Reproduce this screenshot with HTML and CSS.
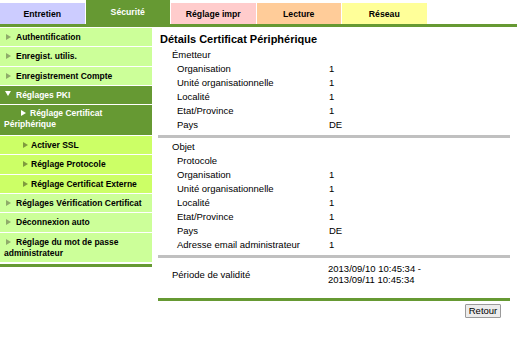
FILE: index.html
```html
<!DOCTYPE html>
<html lang="fr">
<head>
<meta charset="utf-8">
<title>Détails Certificat Périphérique</title>
<link rel="stylesheet" href="styles.css">
</head>
<body>
<div class="tabs">
  <div class="tab t-entretien">Entretien</div>
  <div class="tab t-securite active">Sécurité</div>
  <div class="tab t-impr">Réglage impr</div>
  <div class="tab t-lecture">Lecture</div>
  <div class="tab t-reseau">Réseau</div>
</div>
<div class="layout">
  <nav class="side">
    <ul class="menu">
      <li class="item"><span class="arr"></span>Authentification</li>
      <li class="item"><span class="arr"></span>Enregist. utilis.</li>
      <li class="item"><span class="arr"></span>Enregistrement Compte</li>
      <li class="item open"><span class="arr down"></span>Réglages PKI</li>
      <li class="item open sub cur"><span class="arr white"></span>Réglage Certificat Périphérique</li>
      <li class="item sub child"><span class="arr dark"></span>Activer SSL</li>
      <li class="item sub child"><span class="arr dark"></span>Réglage Protocole</li>
      <li class="item sub child"><span class="arr dark"></span>Réglage Certificat Externe</li>
      <li class="item"><span class="arr"></span>Réglages Vérification Certificat</li>
      <li class="item"><span class="arr"></span>Déconnexion auto</li>
      <li class="item"><span class="arr"></span>Réglage du mot de passe administrateur</li>
    </ul>
  </nav>
  <main class="main">
    <h1 class="title">Détails Certificat Périphérique</h1>
    <div class="grid">
      <div class="head">Émetteur</div>
      <div class="lab">Organisation</div><div class="val">1</div>
      <div class="lab">Unité organisationnelle</div><div class="val">1</div>
      <div class="lab">Localité</div><div class="val">1</div>
      <div class="lab">Etat/Province</div><div class="val">1</div>
      <div class="lab">Pays</div><div class="val">DE</div>
    </div>
    <div class="rule"></div>
    <div class="grid g2">
      <div class="head">Objet</div>
      <div class="lab full">Protocole</div>
      <div class="lab">Organisation</div><div class="val">1</div>
      <div class="lab">Unité organisationnelle</div><div class="val">1</div>
      <div class="lab">Localité</div><div class="val">1</div>
      <div class="lab">Etat/Province</div><div class="val">1</div>
      <div class="lab">Pays</div><div class="val">DE</div>
      <div class="lab">Adresse email administrateur</div><div class="val">1</div>
    </div>
    <div class="rule"></div>
    <div class="period">
      <div class="plab">Période de validité</div>
      <div class="pval">2013/09/10 10:45:34 -<br>2013/09/11 10:45:34</div>
    </div>
    <div class="greenrule"></div>
    <div class="actions"><button class="btn" type="button">Retour</button></div>
  </main>
</div>
</body>
</html>
```
FILE: styles.css
```css
* { box-sizing: border-box; }
html, body { margin: 0; padding: 0; background: #fff; }
body {
  font-family: "Liberation Sans", Arial, sans-serif;
  color: #000;
  width: 517px;
}
.tabs {
  display: flex;
  gap: 1px;
  height: 27px;
  border-bottom: 3px solid #669933;
  align-items: flex-end;
}
.tab {
  width: 84.5px;
  height: 21px;
  font-size: 8.7px;
  font-weight: bold;
  display: flex;
  align-items: center;
  justify-content: center;
  padding-top: 1px;
}
.t-entretien { background: #ccccff; }
.t-securite { background: #669933; color: #fff; height: 24px; padding-top: 0; }
.t-impr { background: #ffcccc; }
.t-lecture { background: #ffcc99; }
.t-reseau { background: #ffff99; }

.layout {
  display: flex;
  align-items: flex-start;
  padding-top: 1px;
}
.side {
  width: 152px;
  flex: none;
  border-bottom: 3px solid #669933;
  padding-bottom: 2px;
}
.menu { list-style: none; margin: 0; padding: 0; }
.item {
  background: #ccff99;
  font-size: 8.5px;
  font-weight: bold;
  line-height: 11px;
  padding: 4px 2px 3.3px 4px;
  margin-bottom: 1px;
}
.item.open { background: #669933; color: #fff; }
.item.child { background: #ccff66; padding-top: 4px; }
.item.cur { padding-top: 3px; padding-bottom: 5px; }
.item:last-child { margin-bottom: 0; padding-top: 4px; padding-bottom: 3px; }
.arr {
  display: inline-block;
  width: 0; height: 0;
  border-left: 5px solid #8fab6a;
  border-top: 3px solid transparent;
  border-bottom: 3px solid transparent;
  margin: 0 5px 0 2px;
  vertical-align: 0;
}
.sub .arr { margin-left: 17px; margin-right: 4px; }
.child .arr { margin-left: 19px; margin-right: 3px; border-left-color: #7f9a3e; }
.arr.white { border-left-color: #fff; }
.arr.down {
  border-left: 3px solid transparent;
  border-right: 3px solid transparent;
  border-top: 5px solid #fff;
  border-bottom: 0;
  margin: 0 5px 1px 1px;
  vertical-align: 1px;
}

.main {
  margin-left: 6px;
  width: 352px;
  font-size: 9.5px;
}
.title {
  margin: 0;
  padding: 4px 0 0 2px;
  font-size: 11px;
  font-weight: bold;
  line-height: 14px;
  height: 20px;
}
.grid {
  display: grid;
  grid-template-columns: 171px 1fr;
  line-height: 14px;
}
.head { grid-column: 1 / 3; padding-left: 14px; }
.lab { padding-left: 19px; }
.lab.full { grid-column: 1 / 3; }
.rule {
  height: 3px;
  background: #c0c0c0;
  margin: 3px 0 2px;
}
.period {
  display: grid;
  grid-template-columns: 170px 1fr;
  align-items: center;
  padding: 3px 0 14px;
  line-height: 11px;
}
.plab { padding-left: 14px; }
.greenrule { height: 3px; background: #669933; margin-top: -1px; }
.actions {
  display: flex;
  justify-content: flex-end;
  padding: 3px 9px 0 0;
}
.btn {
  font-family: "Liberation Sans", Arial, sans-serif;
  font-size: 9.5px;
  height: 14px;
  width: 36px;
  padding: 0;
  line-height: 12px;
  background: #ececec;
  border: 1px solid #9a9a9a;
  border-radius: 1px;
  color: #000;
}
```
